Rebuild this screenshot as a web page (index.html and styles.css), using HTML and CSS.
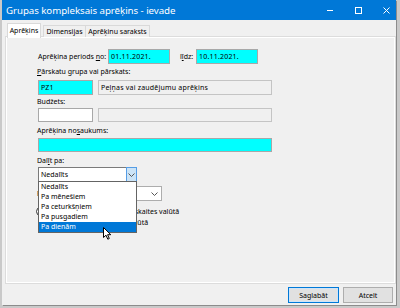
FILE: index.html
```html
<!DOCTYPE html>
<html>
<head>
<meta charset="utf-8">
<link rel="stylesheet" href="styles.css">
</head>
<body>
<div class="window">
  <div class="titlebar">
    <span class="title">Grupas kompleksais aprēķins - ievade</span>
    <div class="controls">
      <span class="ctl"><svg width="6" height="6" viewBox="0 0 6 6"><path d="M0 3.5H6" stroke="#fff" stroke-width="1"/></svg></span>
      <span class="ctl"><svg width="7" height="7" viewBox="0 0 7 7"><rect x="0.5" y="0.5" width="6" height="6" fill="none" stroke="#fff" stroke-width="1"/></svg></span>
      <span class="ctl"><svg width="7" height="7" viewBox="0 0 7 7"><path d="M0.5 0.5L6.5 6.5M6.5 0.5L0.5 6.5" stroke="#fff" stroke-width="1"/></svg></span>
    </div>
  </div>
  <div class="tabs">
    <div class="tab active">Aprēķins</div>
    <div class="tab t2">Dimensijas</div>
    <div class="tab t3">Aprēķinu saraksts</div>
  </div>
  <div class="panel">
    <div class="form">
      <div class="row r1">
        <span class="lbl w70">Aprēķina periods <u>n</u>o:</span>
        <span class="inp cyan w62">01.11.2021.</span>
        <span class="lbl lidz">l<u>ī</u>dz:</span>
        <span class="inp cyan w62">10.11.2021.</span>
      </div>
      <div class="caption c2"><u>P</u>ārskatu grupa vai pārskats:</div>
      <div class="row r2">
        <span class="inp cyan w55">PZ1</span>
        <span class="inp gray w174">Peļņas vai zaudējumu aprēķins</span>
      </div>
      <div class="caption c3">Budžets:</div>
      <div class="row r3">
        <span class="inp white w55"></span>
        <span class="inp gray w174"></span>
      </div>
      <div class="caption c4">Aprēķina no<u>s</u>aukums:</div>
      <div class="row r4">
        <span class="inp cyan w234"></span>
      </div>
      <div class="caption c5">Dal<u>ī</u>t pa:</div>
      <div class="combo-wrap">
        <div class="combo">
          <span class="combo-text">Nedalīts</span>
          <span class="combo-btn"><svg width="7" height="4" viewBox="0 0 7 4"><path d="M0.5 0.5L3.5 3.5L6.5 0.5" fill="none" stroke="#555" stroke-width="1"/></svg></span>
        </div>
        <ul class="list">
          <li>Nedalīts</li>
          <li>Pa mēnešiem</li>
          <li>Pa ceturkšņiem</li>
          <li>Pa pusgadiem</li>
          <li class="sel">Pa dienām</li>
        </ul>
      </div>
      <div class="row r6">
        <span class="lbl w62">Pēc:</span>
        <span class="combo2"><svg width="7" height="4" viewBox="0 0 7 4"><path d="M0.5 0.5L3.5 3.5L6.5 0.5" fill="none" stroke="#555" stroke-width="1"/></svg></span>
      </div>
      <div class="radio-row rr1"><span class="radio"></span><span class="rtext">Rādīt summas arī kontu uzskaites valūtā</span></div>
      <div class="radio-row rr2"><span class="radio"></span><span class="rtext">Rādīt summas pārskata valūtā</span></div>
    </div>
  </div>
  <div class="footer">
    <span class="btn default">Saglabāt</span>
    <span class="btn">Atcelt</span>
  </div>
</div>
<svg class="cursor" width="9" height="13" viewBox="0 0 9 13"><path d="M0.5 0.5V10.5L3 8.2L4.8 12.2L6.3 11.5L4.6 7.7H7.8Z" fill="#fff" stroke="#000" stroke-width="1" stroke-linejoin="round"/></svg>
</body>
</html>
```
FILE: styles.css
```css
* { box-sizing: border-box; }
body {
  margin: 0;
  width: 400px;
  height: 308px;
  overflow: hidden;
  position: relative;
  background: #c9c9c9;
  font-family: "Noto Sans", "DejaVu Sans", sans-serif;
  font-size: 7px;
  color: #000;
}
.window {
  margin-left: 2px;
  width: 394px;
  height: 305px;
  background: #f0f0f0;
  display: flex;
  flex-direction: column;
  overflow: hidden;
  box-shadow: 1px 1px 0 #8c8c8c;
}
.titlebar {
  height: 20px;
  flex: none;
  background: #0078d7;
  color: #fff;
  display: flex;
  align-items: center;
  padding-left: 4px;
}
.title { font-size: 9.7px; flex: 1; letter-spacing: -0.05px; }
.controls { display: flex; margin-right: -4px; }
.ctl { width: 28px; height: 20px; display: flex; align-items: center; justify-content: center; }
.tabs {
  height: 17px;
  flex: none;
  display: flex;
  align-items: flex-end;
  padding-left: 5px;
  position: relative;
  z-index: 2;
}
.tab {
  height: 12px;
  border: 1px solid #d9d9d9;
  border-bottom: none;
  background: #f0f0f0;
  display: flex;
  align-items: center;
  justify-content: center;
  font-size: 7px;
  line-height: 1;
}
.tab.active {
  height: 15px;
  width: 34px;
  margin-bottom: -1px;
  background: #fff;
  padding-bottom: 1px;
}
.tab.t2 { width: 43px; margin-left: 2px; }
.tab.t3 { width: 64px; border-left: none; }
.panel {
  margin: 0 1px 0 4px;
  height: 246px;
  flex: none;
  border: 1px solid #fff;
  outline: 1px solid #dcdcdc;
  outline-offset: 0;
  background: #f0f0f0;
}
.form {
  padding: 11px 0 0 31px;
  display: flex;
  flex-direction: column;
  align-items: flex-start;
}
.row { display: flex; align-items: center; }
.lbl { white-space: nowrap; line-height: 15px; }
.w70 { width: 70px; }
.lidz { margin-left: 10px; width: 16px; }
.inp {
  height: 15px;
  border: 1px solid #a8a8a8;
  padding-left: 2px;
  display: flex;
  align-items: center;
  white-space: nowrap;
  letter-spacing: 0.2px;
}
.cyan { background: #00ffff; }
.gray { background: #f0f0f0; border-color: #c4c4c4; }
.white { background: #fff; }
.w62 { width: 62px; }
.w55 { width: 55px; }
.w174 { width: 174px; margin-left: 5px; }
.w234 { width: 234px; }
.caption { line-height: 12px; height: 12px; white-space: nowrap; margin-left: -1px; }
.c2 { margin-top: 2px; }
.r2 { margin-top: 2px; }
.c3 { margin-top: 1px; }
.r3 .inp { height: 14px; }
.c4 { margin-top: 3px; }
.r4 { margin-top: 1px; }
.r4 .inp { height: 14px; }
.c5 { margin-top: 3px; }
.combo-wrap { position: relative; z-index: 3; }
.combo {
  width: 99px;
  height: 15px;
  background: #fff;
  border: 1px solid #7a7a7a;
  display: flex;
  align-items: center;
}
.combo-text { flex: 1; padding-left: 2px; }
.combo-btn {
  width: 11px;
  height: 15px;
  margin: -1px -1px -1px 0;
  border: 1px solid #569de5;
  background: #cce4f7;
  display: flex;
  align-items: center;
  justify-content: center;
}
.list {
  position: absolute;
  left: 0;
  top: 14px;
  width: 99px;
  margin: 0;
  padding: 0;
  list-style: none;
  background: #fff;
  border: 1px solid #646464;
}
.list li { height: 10px; line-height: 10px; padding-left: 2px; white-space: nowrap; }
.list li.sel { background: #0078d7; color: #fff; }
.r6 { margin-top: 4px; }
.r6 .lbl { width: 62px; margin-left: -1px; }
.combo2 {
  width: 63px;
  height: 15px;
  background: #fff;
  border: 1px solid #adadad;
  display: flex;
  align-items: center;
  justify-content: flex-end;
  padding-right: 3px;
}
.radio-row { display: flex; align-items: center; height: 11px; }
.rr1 { margin-top: 5px; margin-left: -2px; }
.rr2 { margin-left: 2px; }
.rr2 .radio { margin-right: 0; }
.radio {
  width: 9px;
  height: 9px;
  border: 1px solid #333;
  border-radius: 50%;
  background: #fff;
  margin-right: 2px;
}
.rtext { white-space: nowrap; }
.footer {
  display: flex;
  justify-content: flex-end;
  gap: 4px;
  padding: 4px 3px 0 0;
}
.btn {
  width: 50px;
  height: 16px;
  border: 1px solid #adadad;
  background: #e1e1e1;
  display: flex;
  align-items: center;
  justify-content: center;
  font-size: 7px;
}
.btn.default { border: 1px solid #0078d7; box-shadow: inset 0 0 0 1px #cfe4f8; width: 51px; }
.cursor { position: absolute; left: 103px; top: 227px; z-index: 10; }
```
